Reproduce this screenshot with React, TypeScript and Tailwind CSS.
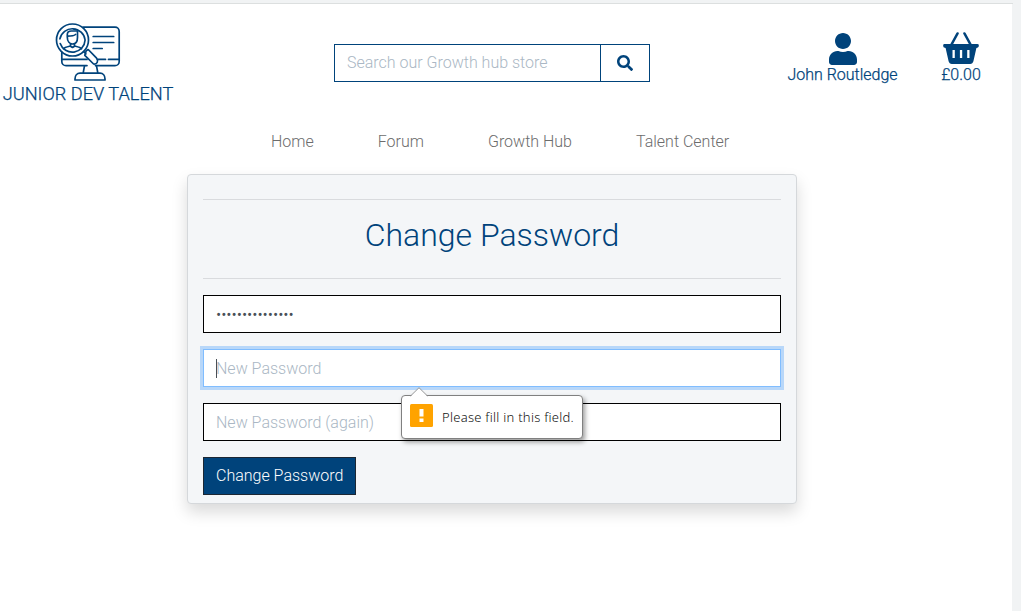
import React from "react";
import { FaSearch, FaUser } from "react-icons/fa";

function Logo() {
  return (
    <svg
      className="h-[60px] w-[66px]"
      viewBox="0 0 66 60"
      fill="none"
      stroke="#00437b"
      strokeWidth="1.7"
      strokeLinecap="round"
      strokeLinejoin="round"
    >
      <path d="M28 5.2h32a4.2 4.2 0 0 1 4.2 4.2v30a4.2 4.2 0 0 1-4.2 4.2H40.5M32 43.6H11a4.2 4.2 0 0 1-4.2-4.2v-9" />
      <path d="M7 37.4h25M42.5 37.4h8M53.5 37.4h10.500" />
      <path d="M38.200 14.500h20.500M38.200 20.500h20.500M38.200 26.500h9" />
      <circle cx="17.500" cy="18" r="16" />
      <path d="M5.200 21.500a12.800 12.800 0 0 0 24.900-3.500 12.800 12.800 0 0 0-25.200-1.200" />
      <path d="M12.300 15v-2.500c0-2.500 2-3.500 4-3.500h6.200v6.500c0 4-2 6.500-5 6.500s-5.200-2.800-5.200-7ZM12.500 14.200c4 0 6.500-.3 8-1.700M15.500 22v2.200l2 1.300 2-1.300v-2.200M8.500 26.800c1-1.500 3.500-2 6.500-2.700M20 24.100c3 .7 5.500 1.200 6.500 2.700" />
      <path d="m28.500 29.500 2.400 2.400M31.200 28.700l2-1.200 8.400 8.700c2 2.300.8 6.500-3 5.800l-8.800-8.700Z" />
      <path d="m29.500 43.800-1.300 7M41.500 43.800l1.300 7M25 51.200h20c3 0 5 2.500 5 5.800v1H20v-1c0-3.300 2-5.800 5-5.800Z" />
    </svg>
  );
}

function Basket() {
  return (
    <svg className="h-8 w-9" viewBox="0 0 36 32" fill="#00437b">
      <path d="M14.500 1.500 8.500 12.500M21.500 1.500l6 11" stroke="#00437b" strokeWidth="2.600" strokeLinecap="round" />
      <path
        fillRule="evenodd"
        d="M1.800 12h32.500a1.500 1.500 0 0 1 1.500 1.700c0 1-.6 1.800-1.600 2.100l-.8.300-3 13.200c-.4 1.600-1.600 2.600-3.200 2.600H8.800c-1.600 0-2.800-1-3.200-2.600l-3-13.200-.8-.3A2 2 0 0 1 .2 13.700 1.500 1.500 0 0 1 1.800 12ZM9.500 18v8h2.300v-8ZM16.900 18v8h2.300v-8ZM24.200 18v8h2.300v-8Z"
      />
    </svg>
  );
}

function ValidationBubble() {
  return (
    <div className="absolute left-[198px] top-[46px] z-10 flex h-11 w-[182px] items-center rounded border border-[#808080] bg-white pl-2 shadow-[2px_3px_5px_rgba(0,0,0,0.4)]">
      <svg className="absolute -top-[9px] left-[8px] h-[10px] w-[18px]" viewBox="0 0 18 10">
        <path d="M0 10 9 1l9 9Z" fill="#fff" />
        <path d="M.5 9 9 .7 17.500 9" fill="none" stroke="#999" />
      </svg>
      <svg className="-mt-[3px] h-[23px] w-[23px] shrink-0" viewBox="0 0 23 23">
        <rect width="23" height="23" rx="1.500" fill="#ffa300" />
        <path d="M9.500 5h4v7.500h-4ZM9.500 14.500h4v3.500h-4Z" fill="#fff" />
      </svg>
      <span className="ml-[9px] whitespace-nowrap font-['Noto_Sans',sans-serif] text-[13px] leading-4 tracking-[0.27px] text-[#111]">
        Please fill in this field.
      </span>
    </div>
  );
}

const field =
  "block h-[38px] w-full border bg-white px-3 text-base font-light text-[#495057] outline-none placeholder:text-[#aab7c4]";

export default function App() {
  return (
    <div className="flex h-[611px] w-[1021px] flex-col overflow-hidden bg-[#f1f3f4] font-[Roboto,sans-serif] font-light">
      <div className="h-1 w-[1013px] shrink-0 border-b border-[#dcdfdf]" />
      <div className="w-[1012px] flex-1 bg-white">
        <header className="flex h-[113px] items-start">
          <div className="ml-[3px] flex w-[170px] flex-col items-center pt-[18px] text-[#00437b]">
            <Logo />
            <span className="whitespace-nowrap text-[18.200px] leading-6 [-webkit-text-stroke:0.250px]">JUNIOR DEV TALENT</span>
          </div>
          <form className="mt-10 ml-[161px] flex h-[38px] w-[316px] border border-[#00437b]">
            <input
              className="w-[265px] px-3 text-base font-light outline-none placeholder:text-[#aab7c4]"
              placeholder="Search our Growth hub store"
            />
            <button type="button" className="flex flex-1 items-center justify-center border-l border-[#00437b] text-[#00437b]">
              <FaSearch size={16} />
            </button>
          </form>
          <div className="mt-[29px] ml-[137px] flex w-[111px] flex-col items-center text-[#00437b]">
            <FaUser className="h-8 w-7" />
            <span className="-mt-[2px] whitespace-nowrap leading-6 [-webkit-text-stroke:0.250px]">John Routledge</span>
          </div>
          <div className="mt-[28px] ml-[43px] flex w-10 flex-col items-center text-[#00437b]">
            <Basket />
            <span className="-mt-px leading-6 [-webkit-text-stroke:0.250px]">£0.00</span>
          </div>
        </header>
        <nav className="flex h-[57px] gap-16 pt-[13px] pl-[271px] leading-6 text-[#6c6c6c]">
          <a>Home</a>
          <a>Forum</a>
          <a>Growth Hub</a>
          <a>Talent Center</a>
        </nav>
        <main className="ml-[187px] h-[330px] w-[610px] rounded border border-[#d5d8db] bg-[#f4f6f8] px-[15px] pt-6 shadow-[0_8px_16px_rgba(0,0,0,0.15)]">
          <h1 className="h-20 border-y border-[#d9dbde] pt-4 text-center text-[32px] leading-[38px] text-[#00437b]">
            Change Password
          </h1>
          <form className="mt-4 flex flex-col items-start gap-4">
            <input type="password" className={`${field} border-black`} defaultValue="growthhubtalent" />
            <div className="relative w-full">
              <input
                className={`${field} border-[#80bdff] shadow-[0_0_0_3px_#b8d7f9]`}
                placeholder="New Password"
              />
              <span className="absolute left-[13px] top-[10px] h-[19px] w-px bg-[#495057]" />
              <ValidationBubble />
            </div>
            <input className={`${field} border-black`} placeholder="New Password (again)" />
            <button type="button" className="h-[38px] border border-[#1c2733] bg-[#00437b] px-3 text-base text-white">
              Change Password
            </button>
          </form>
        </main>
      </div>
    </div>
  );
}
